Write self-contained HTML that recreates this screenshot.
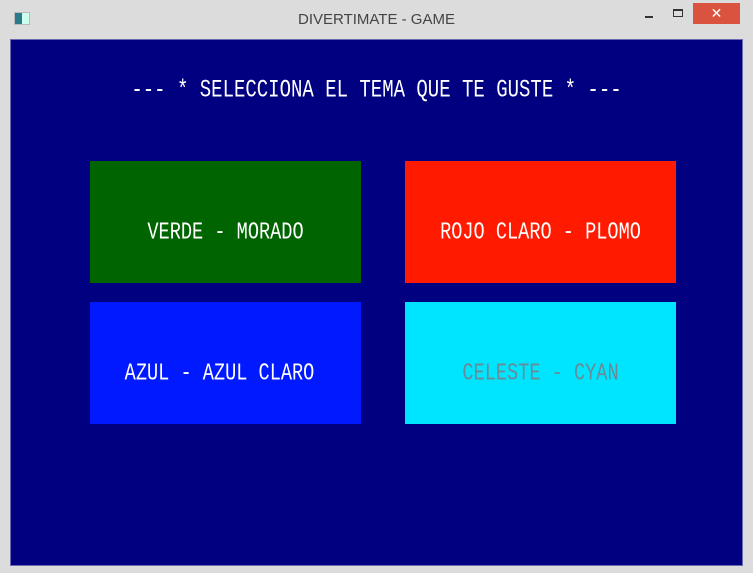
<!DOCTYPE html>
<html><head><meta charset="utf-8"><style>
*{margin:0;padding:0;box-sizing:border-box}
html,body{width:753px;height:573px;overflow:hidden;background:#dcdcdc;font-family:"Liberation Sans",sans-serif}
.title{position:absolute;top:11px;left:0;width:753px;text-align:center;font-size:15px;color:#444}
.icon{position:absolute;left:14px;top:12px;width:16px;height:13px;border:1px solid #bbb;background:linear-gradient(90deg,#2a7a8a 0 50%,#cfe 50%)}
.min{position:absolute;left:645px;top:16px;width:8px;height:2px;background:#333}
.max{position:absolute;left:673px;top:9px;width:10px;height:8px;border:1px solid #333;border-top-width:2px}
.close{position:absolute;left:693px;top:3px;width:47px;height:21px;background:#d9533f;color:#fff;text-align:center;font-size:14px;line-height:21px}
.main{position:absolute;left:10px;top:39px;width:733px;height:527px;background:#000080;border:1px solid #6a6ab0}
.t{position:absolute;font-family:"Liberation Mono",monospace;font-size:19px;white-space:pre;transform:scaleY(1.3);text-align:center}
.box{position:absolute;width:271px;height:122px;display:flex;align-items:center;justify-content:center}
.box span{font-family:"Liberation Mono",monospace;font-size:18.6px;white-space:pre;transform:scaleY(1.3);display:inline-block}
</style></head><body>
<div class="icon"></div>
<div class="title">DIVERTIMATE - GAME</div>
<div class="min"></div><div class="max"></div>
<div class="close">✕</div>
<div class="main"></div>
<div class="t" style="left:0;width:753px;top:79px;color:#fff">--- * SELECCIONA EL TEMA QUE TE GUSTE * ---</div>
<div class="box" style="left:90px;top:161px;background:#006400"><span style="color:#fff;margin-top:20px">VERDE - MORADO</span></div>
<div class="box" style="left:405px;top:161px;background:#ff1a00"><span style="color:#fff;margin-top:20px">ROJO CLARO - PLOMO</span></div>
<div class="box" style="left:90px;top:302px;background:#0019ff"><span style="color:#fff;margin-top:20px;margin-left:-12px">AZUL - AZUL CLARO</span></div>
<div class="box" style="left:405px;top:302px;background:#00e5ff"><span style="color:#6a8a96;margin-top:20px">CELESTE - CYAN</span></div>
</body></html>
